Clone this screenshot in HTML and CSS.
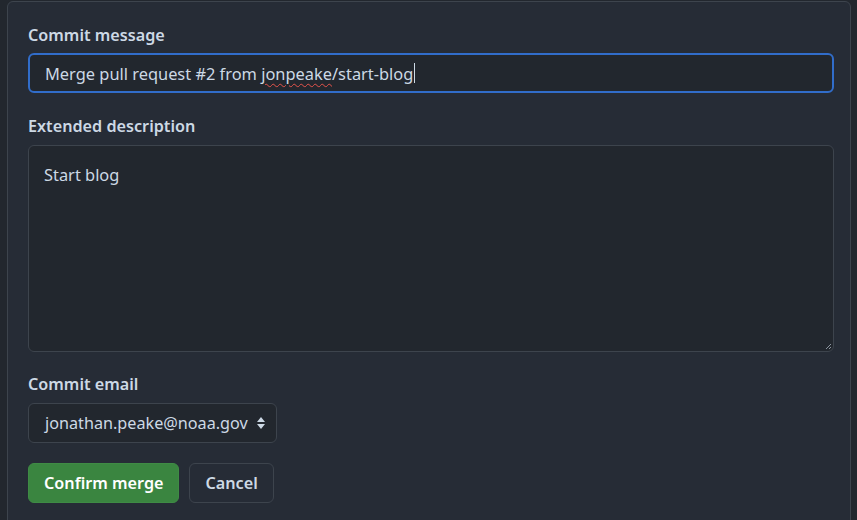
FILE: index.html
```html
<!DOCTYPE html>
<html>
<head>
<meta charset="utf-8">
<link rel="stylesheet" href="styles.css">
</head>
<body>
<div class="panel">
  <div class="field">
    <label class="label">Commit message</label>
    <div class="input focused"><span>Merge pull request #2 from <span class="spell">jonpeake</span>/start-blog</span><span class="caret"></span></div>
  </div>
  <div class="field field-desc">
    <label class="label">Extended description</label>
    <div class="textarea">Start blog
      <svg class="grip" width="8" height="8" viewBox="0 0 8 8"><path d="M7 2 L2 7 M7 5 L5 7" stroke="#8b949e" stroke-width="1"/></svg>
    </div>
  </div>
  <div class="field">
    <label class="label">Commit email</label>
    <div class="select">jonathan.peake@noaa.gov
      <svg class="arrows" width="10" height="14" viewBox="0 0 10 14"><path d="M5 1 L9 6 L1 6 Z M5 13 L9 8 L1 8 Z" fill="#cdd9e5"/></svg>
    </div>
  </div>
  <div class="actions">
    <button class="btn primary">Confirm merge</button>
    <button class="btn">Cancel</button>
  </div>
</div>
</body>
</html>
```

FILE: styles.css
```css
html, body {
  margin: 0;
  padding: 0;
  background: #22272e;
  width: 857px;
  height: 520px;
  overflow: hidden;
  font-family: "Noto Sans", "Open Sans", sans-serif;
  color: #cdd9e5;
}
.panel {
  margin: 1px 6px 0 7px;
  height: 540px;
  background: #262c36;
  border: 1px solid #3d444d;
  border-radius: 6px;
  padding: 21px 16px 0 20px;
  box-sizing: border-box;
}
.field {
  margin-bottom: 20px;
}
.field:first-child {
  margin-bottom: 21px;
}
.field:first-child .label {
  margin-bottom: 6px;
}
.label {
  display: block;
  font-weight: 600;
  font-size: 16.2px;
  line-height: 24px;
  margin-bottom: 7px;
  color: #cdd9e5;
}
.input {
  height: 40px;
  box-sizing: border-box;
  border: 2px solid #316dca;
  border-radius: 6px;
  background: #22272e;
  padding: 0 15px;
  display: flex;
  align-items: center;
  font-size: 16.4px;
}
.spell {
  text-decoration: underline wavy #e5534b;
  text-decoration-thickness: 1px;
  text-underline-offset: 3px;
}
.caret {
  display: inline-block;
  width: 1px;
  height: 20px;
  background: #cdd9e5;
  margin-left: 1px;
}
.textarea {
  position: relative;
  height: 207px;
  box-sizing: border-box;
  border: 1px solid #3d444d;
  border-radius: 6px;
  background: #22272e;
  padding: 17px 15px;
  font-size: 16.4px;
  line-height: 24px;
}
.grip {
  position: absolute;
  right: 1px;
  bottom: 1px;
}
.select {
  width: 249px;
  height: 40px;
  box-sizing: border-box;
  border: 1px solid #3d444d;
  border-radius: 6px;
  background: #22272e;
  padding: 0 10px 0 16px;
  display: flex;
  align-items: center;
  justify-content: space-between;
  font-size: 16.2px;
}
.actions {
  display: flex;
  gap: 10px;
}
.btn {
  height: 40px;
  box-sizing: border-box;
  border: 1px solid #3d444d;
  border-radius: 6px;
  background: #262c36;
  color: #cdd9e5;
  font-family: inherit;
  font-weight: 600;
  font-size: 16.2px;
  padding: 0 15px;
}
.btn.primary {
  background: #3a8540;
  border-color: #3f8b45;
  color: #ffffff;
}
```
